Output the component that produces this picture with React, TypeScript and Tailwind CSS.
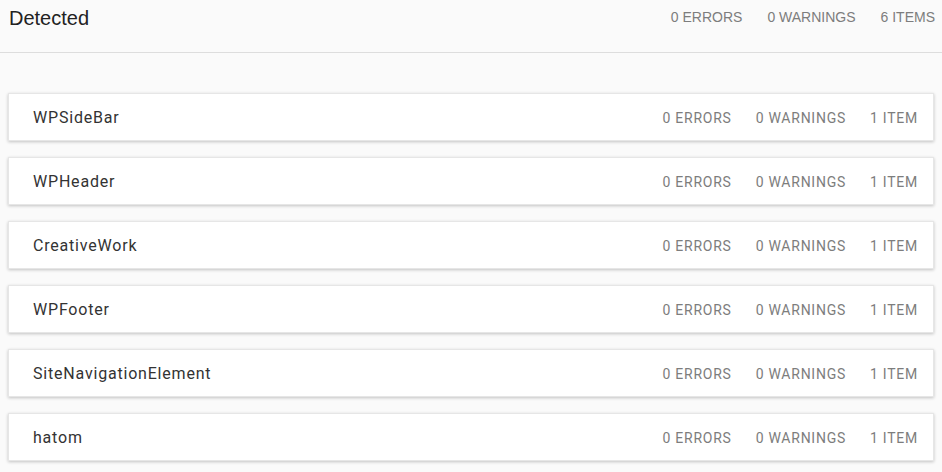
import React from "react";

type Entity = {
  name: string;
  errors: number;
  warnings: number;
  items: number;
};

const entities: Entity[] = [
  { name: "WPSideBar", errors: 0, warnings: 0, items: 1 },
  { name: "WPHeader", errors: 0, warnings: 0, items: 1 },
  { name: "CreativeWork", errors: 0, warnings: 0, items: 1 },
  { name: "WPFooter", errors: 0, warnings: 0, items: 1 },
  { name: "SiteNavigationElement", errors: 0, warnings: 0, items: 1 },
  { name: "hatom", errors: 0, warnings: 0, items: 1 },
];

function plural(n: number, word: string) {
  return `${n} ${word}${n === 1 ? "" : "S"}`;
}

function EntityCard({ entity }: { entity: Entity }) {
  return (
    <div className="h-[48px] flex items-center justify-between bg-white border border-[#e6e6e6] shadow-[0_1px_3px_rgba(0,0,0,0.22)] pt-[2px] pl-[24px] pr-[15px]">
      <span className="text-[16px] tracking-[0.8px] text-[#333333] font-['Roboto',sans-serif]">
        {entity.name}
      </span>
      <div className="flex items-center gap-[24px] text-[14px] tracking-[0.75px] text-[#7d7d7d] font-['Roboto',sans-serif]">
        <span>{plural(entity.errors, "ERROR")}</span>
        <span>{plural(entity.warnings, "WARNING")}</span>
        <span>{plural(entity.items, "ITEM")}</span>
      </div>
    </div>
  );
}

export default function App() {
  const total = entities.reduce((s, e) => s + e.items, 0);

  return (
    <main className="min-h-screen bg-[#fafafa]">
      {/* Summary header */}
      <header className="h-[53px] border-b border-[#dddddd]">
        <div className="h-[35px] flex items-center justify-between pl-[9px] pr-[7px] font-['Liberation_Sans',Arial,sans-serif]">
          <h1 className="text-[20px] text-[#222222]">Detected</h1>
          <div className="flex items-center gap-[25px] text-[14px] text-[#7d7d7d]">
            <span>0 ERRORS</span>
            <span>0 WARNINGS</span>
            <span>{total} ITEMS</span>
          </div>
        </div>
      </header>

      {/* Detected entities */}
      <section className="flex flex-col gap-[16px] pt-[40px] px-[8px] pb-[10px]">
        {entities.map((e) => (
          <EntityCard key={e.name} entity={e} />
        ))}
      </section>
    </main>
  );
}
